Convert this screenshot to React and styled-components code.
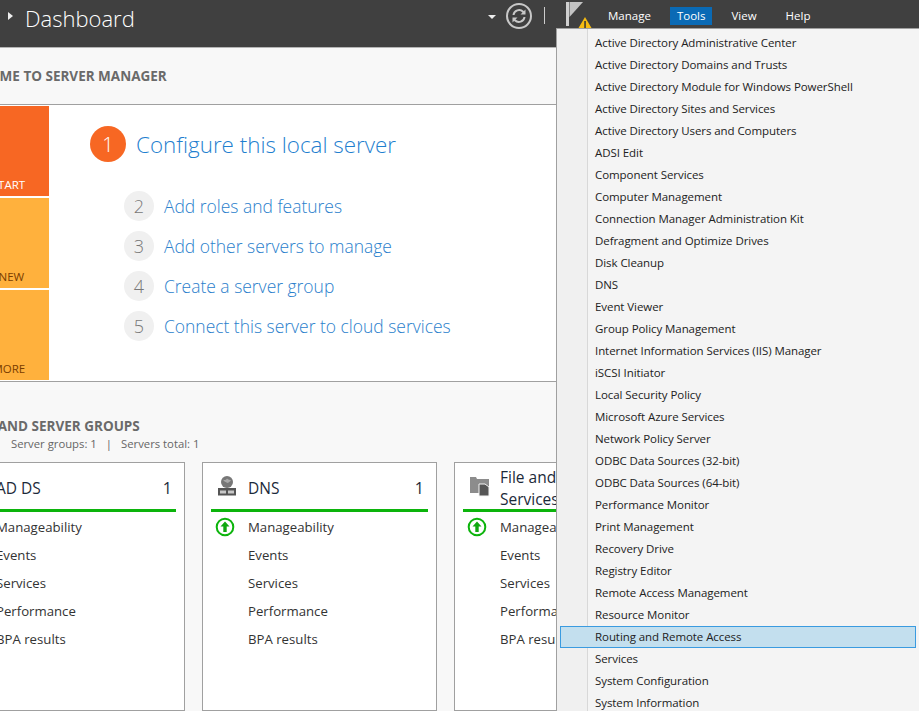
import React from 'react';
import styled, { createGlobalStyle } from 'styled-components';

const GlobalStyle = createGlobalStyle`
  html, body { margin: 0; padding: 0; background: #f8f8f8; }
  body { font-family: "Open Sans", "Noto Sans", sans-serif; }
`;

const Page = styled.div`
  position: relative;
  width: 919px;
  height: 711px;
  overflow: hidden;
  background: #f8f8f8;
`;

// Header
const Header = styled.header`
  display: flex;
  height: 47px;
  background: #404040;
  border-bottom: 1px solid #b4b4b4;
`;
const Crumb = styled.div`
  display: flex;
  flex: 1;
  align-items: flex-start;
  padding: 2px 0 0 8px;
  color: #fff;
`;
const CrumbArrow = styled.span`
  width: 0;
  height: 0;
  margin: 10px 12px 0 0;
  border-left: 5px solid #eee;
  border-top: 4px solid transparent;
  border-bottom: 4px solid transparent;
`;
const Title = styled.h1`
  margin: 0;
  font-size: 22px;
  font-weight: 300;
  line-height: 32px;
  color: #fff;
`;
const Tools = styled.div`
  display: flex;
  align-items: flex-start;
  height: 47px;
`;
const DropArrow = styled.span`
  width: 0;
  height: 0;
  margin: 15px 9px 0 0;
  border-top: 4px solid #eee;
  border-left: 4px solid transparent;
  border-right: 4px solid transparent;
`;
const Separator = styled.span`
  width: 1px;
  height: 17px;
  margin: 7px 21px 0 11px;
  background: #ccc;
`;
const FlagBox = styled.div`
  position: relative;
  width: 26px;
  height: 28px;
  margin-right: 10px;
`;
const Nav = styled.nav`
  display: flex;
  gap: 13px;
  padding: 7px 0 0 0;
`;
const NavItem = styled.span`
  padding: 0 6.5px;
  height: 18px;
  font-size: 11.5px;
  line-height: 18px;
  color: #fff;
  background: ${(p) => (p.$active ? '#0a6ab5' : 'transparent')};
  &:last-child { margin-left: 3px; }
`;
const Corner = styled.div`
  width: 82px;
  margin-left: 20px;
  background: #001a33;
`;

// Welcome
const Content = styled.main`
  margin-left: -101px;
`;
const SectionTitle = styled.h2`
  margin: 0;
  padding-left: 53px;
  font-size: 13.5px;
  font-weight: 700;
  color: #6a6a6a;
  white-space: nowrap;
`;
const WelcomeHead = styled.div`
  height: 56px;
  display: flex;
  align-items: center;
`;
const WelcomePanel = styled.section`
  display: flex;
  width: 1100px;
  height: 276px;
  background: #fff;
  border-top: 1px solid #a0a0a0;
  border-bottom: 1px solid #a0a0a0;
`;
const TileColumn = styled.div`
  display: flex;
  flex-direction: column;
  gap: 2px;
  width: 150px;
  padding-top: 1px;
`;
const Tile = styled.div`
  display: flex;
  align-items: flex-end;
  height: 90px;
  box-sizing: border-box;
  padding: 0 0 3px 55px;
  font-size: 11.5px;
  line-height: 16px;
  white-space: nowrap;
  background: ${(p) => p.$bg};
  color: ${(p) => p.$color};
`;
const Steps = styled.div`
  padding: 21px 0 0 41px;
`;
const MainStep = styled.div`
  display: flex;
  align-items: center;
  gap: 10px;
  height: 36px;
  margin-bottom: 29px;
`;
const MainBullet = styled.span`
  display: flex;
  align-items: center;
  justify-content: center;
  width: 36px;
  height: 36px;
  border-radius: 50%;
  background: #f76723;
  color: #fff;
  font-size: 20px;
  font-weight: 300;
`;
const MainLink = styled.span`
  font-size: 22.4px;
  font-weight: 300;
  color: #1f7fcf;
  white-space: nowrap;
`;
const SubStep = styled.div`
  display: flex;
  align-items: center;
  gap: 10px;
  height: 30px;
  margin: 0 0 10px 34px;
`;
const SubBullet = styled.span`
  display: flex;
  align-items: center;
  justify-content: center;
  width: 30px;
  height: 30px;
  border-radius: 50%;
  background: #f0f0f0;
  color: #777;
  font-size: 18px;
  font-weight: 300;
`;
const SubLink = styled.span`
  font-size: 17.45px;
  font-weight: 300;
  color: #2a80cc;
  white-space: nowrap;
`;

// Roles and server groups
const Groups = styled.section`
  padding-top: 35px;
`;
const GroupsSub = styled.div`
  display: flex;
  gap: 9px;
  margin: 1px 0 10px;
  padding-left: 47px;
  font-size: 11.3px;
  line-height: 16px;
  color: #666;
  white-space: nowrap;
`;
const Pipe = styled.span`
  color: ${(p) => p.$color || '#666'};
`;
const Cards = styled.div`
  display: flex;
  gap: 17px;
  margin-left: 51px;
`;
const Card = styled.article`
  flex: none;
  width: 235px;
  height: 249px;
  box-sizing: border-box;
  padding: 0 8px;
  background: #fff;
  border: 1px solid #a0a0a0;
`;
const CardHead = styled.div`
  display: flex;
  align-items: center;
  height: 43px;
  padding-top: 3px;
  border-bottom: 3px solid #0cb40c;
`;
const CardIcon = styled.div`
  flex: none;
  width: 37px;
  padding: 0 0 3px 6px;
  box-sizing: border-box;
  display: flex;
`;
const CardTitle = styled.div`
  flex: 1;
  font-size: 15.5px;
  line-height: 22px;
  color: #1c2a3a;
`;
const CardCount = styled.div`
  font-size: 16px;
  color: #1c2a3a;
  padding-right: 4px;
`;
const Status = styled.div`
  display: flex;
  align-items: center;
  height: 28px;
  font-size: 13.2px;
  color: #333;
  white-space: nowrap;
`;
const StatusIcon = styled.span`
  flex: none;
  display: flex;
  width: 37px;
  padding-left: 4px;
  box-sizing: border-box;
`;
const StatusList = styled.div`
  padding-top: 1px;
`;

// Tools dropdown, it lies over the page
const Menu = styled.ul`
  position: absolute;
  top: 28px;
  left: 556px;
  right: 0;
  bottom: 0;
  margin: 0;
  padding: 3px 3px 0 3px;
  list-style: none;
  background: linear-gradient(to right, #f0f0f0 30px, #d8d8d8 30px, #d8d8d8 31px, #f4f4f4 31px);
  border-left: 1px solid #a0a0a0;
  border-top: 1px solid #a0a0a0;
  overflow: hidden;
`;
const MenuItem = styled.li`
  height: 22px;
  box-sizing: border-box;
  padding-left: ${(p) => (p.$hover ? '34px' : '35px')};
  font-size: 11.5px;
  letter-spacing: -0.07px;
  line-height: ${(p) => (p.$hover ? '20px' : '22px')};
  color: #222;
  white-space: nowrap;
  ${(p) => p.$hover && 'background: #c3dfee; border: 1px solid #3a9be0;'}
`;

const Refresh = () => (
  <svg width="28" height="28" viewBox="0 0 28 28" fill="none" style={{ margin: '2px 0 0 0' }}>
    <circle cx="14" cy="14" r="12" stroke="#c8c8c8" strokeWidth="2" />
    <path d="M8.5 13a5.6 5.6 0 0 1 9.6-3.2l1.4 1.6" stroke="#c8c8c8" strokeWidth="2" />
    <path d="M20.5 7.5v5h-5z" fill="#c8c8c8" />
    <path d="M19.5 15a5.6 5.6 0 0 1-9.6 3.2l-1.4-1.6" stroke="#c8c8c8" strokeWidth="2" />
    <path d="M7.5 20.5v-5h5z" fill="#c8c8c8" />
  </svg>
);

const Flag = () => (
  <svg width="26" height="28" viewBox="0 0 26 28">
    <rect x="0" y="2" width="3" height="24" fill="#d0d0d0" />
    <path d="M3.500 2h13.500L3.500 17z" fill="#c4c4c4" />
    <path d="M19 17l6.500 11h-13z" fill="#f7bc10" />
    <rect x="18.300" y="21" width="1.500" height="7" fill="#333" />
  </svg>
);

const UpArrow = () => (
  <svg width="20" height="20" viewBox="0 0 20 20">
    <circle cx="10" cy="10" r="8.300" fill="#fff" stroke="#0cb40c" strokeWidth="2" />
    <path d="M10 4.500l4.500 5h-2.800v5.500h-3.400v-5.500h-2.800z" fill="#10a810" />
  </svg>
);

const DnsIcon = () => (
  <svg width="20" height="20" viewBox="0 0 20 20">
    <circle cx="10" cy="6" r="6" fill="#777" />
    <path d="M6 3.500c2 1 3 .5 4-1 1 1 3 1.500 4 2-1 1.500-2 1-3 2.500-2-1-4-1-5-3.500z" fill="#aaa" />
    <rect x="1" y="12" width="18" height="7.500" fill="#555" />
    <rect x="3" y="14.500" width="6" height="3" fill="#c8c8c8" />
    <rect x="11" y="14.500" width="6" height="3" fill="#c8c8c8" />
  </svg>
);

const FolderIcon = () => (
  <svg width="22" height="22" viewBox="0 0 22 22">
    <path d="M1 2h6l1 2h12v14H1z" fill="#8c8c8c" />
    <path d="M10 9h6l4 3v9H10z" fill="#565656" stroke="#f4f4f4" strokeWidth="1" />
  </svg>
);

const menuItems = [
  'Active Directory Administrative Center',
  'Active Directory Domains and Trusts',
  'Active Directory Module for Windows PowerShell',
  'Active Directory Sites and Services',
  'Active Directory Users and Computers',
  'ADSI Edit',
  'Component Services',
  'Computer Management',
  'Connection Manager Administration Kit',
  'Defragment and Optimize Drives',
  'Disk Cleanup',
  'DNS',
  'Event Viewer',
  'Group Policy Management',
  'Internet Information Services (IIS) Manager',
  'iSCSI Initiator',
  'Local Security Policy',
  'Microsoft Azure Services',
  'Network Policy Server',
  'ODBC Data Sources (32-bit)',
  'ODBC Data Sources (64-bit)',
  'Performance Monitor',
  'Print Management',
  'Recovery Drive',
  'Registry Editor',
  'Remote Access Management',
  'Resource Monitor',
  'Routing and Remote Access',
  'Services',
  'System Configuration',
  'System Information',
];

const steps = ['Add roles and features', 'Add other servers to manage', 'Create a server group', 'Connect this server to cloud services'];
const statuses = ['Manageability', 'Events', 'Services', 'Performance', 'BPA results'];

const cards = [
  { title: 'AD DS', count: 1, icon: <DnsIcon /> },
  { title: 'DNS', count: 1, icon: <DnsIcon /> },
  { title: 'File and Storage Services', count: 1, icon: <FolderIcon /> },
];

export default function App() {
  return (
    <Page>
      <GlobalStyle />
      <Header>
        <Crumb>
          <CrumbArrow />
          <Title>Dashboard</Title>
        </Crumb>
        <Tools>
          <DropArrow />
          <Refresh />
          <Separator />
          <FlagBox>
            <Flag />
          </FlagBox>
          <Nav>
            <NavItem>Manage</NavItem>
            <NavItem $active>Tools</NavItem>
            <NavItem>View</NavItem>
            <NavItem>Help</NavItem>
          </Nav>
          <Corner />
        </Tools>
      </Header>
      <Content>
        <WelcomeHead>
          <SectionTitle>WELCOME TO SERVER MANAGER</SectionTitle>
        </WelcomeHead>
        <WelcomePanel>
          <TileColumn>
            <Tile $bg="#f76723" $color="#fff">QUICK START</Tile>
            <Tile $bg="#ffb13d" $color="#7a3d00">WHAT'S NEW</Tile>
            <Tile $bg="#ffb13d" $color="#7a3d00">LEARN MORE</Tile>
          </TileColumn>
          <Steps>
            <MainStep>
              <MainBullet>1</MainBullet>
              <MainLink>Configure this local server</MainLink>
            </MainStep>
            {steps.map((s, i) => (
              <SubStep key={s}>
                <SubBullet>{i + 2}</SubBullet>
                <SubLink>{s}</SubLink>
              </SubStep>
            ))}
          </Steps>
        </WelcomePanel>
        <Groups>
          <SectionTitle>ROLES AND SERVER GROUPS</SectionTitle>
          <GroupsSub>
            <span>Roles: 3</span>
            <Pipe $color="#2a80cc">|</Pipe>
            <span>Server groups: 1</span>
            <Pipe>|</Pipe>
            <span>Servers total: 1</span>
          </GroupsSub>
          <Cards>
            {cards.map((c) => (
              <Card key={c.title}>
                <CardHead>
                  <CardIcon>{c.icon}</CardIcon>
                  <CardTitle>{c.title}</CardTitle>
                  <CardCount>{c.count}</CardCount>
                </CardHead>
                <StatusList>
                  {statuses.map((s, i) => (
                    <Status key={s}>
                      <StatusIcon>{i === 0 && <UpArrow />}</StatusIcon>
                      {s}
                    </Status>
                  ))}
                </StatusList>
              </Card>
            ))}
          </Cards>
        </Groups>
      </Content>
      <Menu>
        {menuItems.map((m) => (
          <MenuItem key={m} $hover={m === 'Routing and Remote Access'}>{m}</MenuItem>
        ))}
      </Menu>
    </Page>
  );
}
